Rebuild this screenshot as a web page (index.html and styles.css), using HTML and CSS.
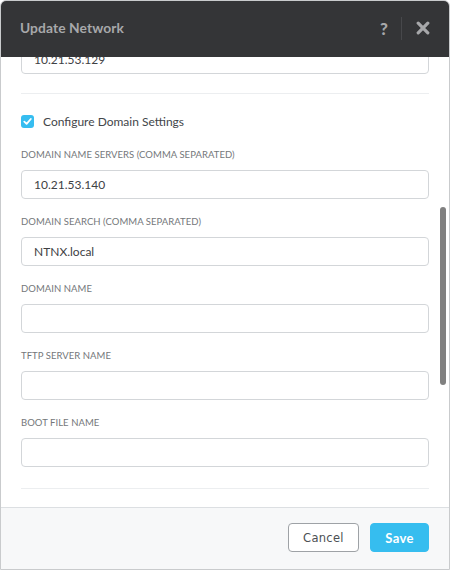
FILE: index.html
```html
<!DOCTYPE html>
<html lang="en">
<head>
<meta charset="utf-8">
<title>Update Network</title>
<link rel="stylesheet" href="styles.css">
</head>
<body>
<div class="dialog">
  <header class="dlg-header">
    <h1 class="dlg-title">Update Network</h1>
    <div class="dlg-actions">
      <span class="dlg-help">?</span>
      <span class="dlg-divider"></span>
      <svg class="dlg-close" width="14" height="14" viewBox="0 0 14 14" aria-label="Close">
        <path d="M2.2 2.2 L11.8 11.8 M11.8 2.2 L2.2 11.8" stroke="#a7a8aa" stroke-width="3.2" stroke-linecap="round"/>
      </svg>
    </div>
  </header>
  <div class="dlg-body" id="scroller">
    <div class="field">
      <label class="field-label">Name</label>
      <input class="field-input" type="text" value="vlan.0">
    </div>
    <div class="field">
      <label class="field-label">VLAN ID</label>
      <input class="field-input" type="text" value="0">
    </div>
    <div class="sep"></div>
    <label class="check-row"><span class="check"><svg width="9" height="9" viewBox="0 0 9 9"><path d="M1.3 4.6 L3.6 6.8 L7.8 2" fill="none" stroke="#ffffff" stroke-width="1.8" stroke-linecap="round" stroke-linejoin="round"/></svg></span>Enable IP Address Management</label>
    <div class="field">
      <label class="field-label">Network IP Address / Prefix Length</label>
      <input class="field-input" type="text" value="10.21.53.0/25">
    </div>
    <div class="field">
      <label class="field-label">Gateway IP Address</label>
      <input class="field-input" type="text" value="10.21.53.129">
    </div>
    <div class="sep" id="anchor"></div>
    <label class="check-row"><span class="check"><svg width="9" height="9" viewBox="0 0 9 9"><path d="M1.3 4.6 L3.6 6.8 L7.8 2" fill="none" stroke="#ffffff" stroke-width="1.8" stroke-linecap="round" stroke-linejoin="round"/></svg></span>Configure Domain Settings</label>
    <div class="field">
      <label class="field-label">Domain Name Servers (Comma Separated)</label>
      <input class="field-input" type="text" value="10.21.53.140">
    </div>
    <div class="field">
      <label class="field-label">Domain Search (Comma Separated)</label>
      <input class="field-input" type="text" value="NTNX.local">
    </div>
    <div class="field">
      <label class="field-label">Domain Name</label>
      <input class="field-input" type="text" value="">
    </div>
    <div class="field">
      <label class="field-label">TFTP Server Name</label>
      <input class="field-input" type="text" value="">
    </div>
    <div class="field">
      <label class="field-label">Boot File Name</label>
      <input class="field-input" type="text" value="">
    </div>
    <div class="sep sep-last"></div>
    <div class="section-title">IP Address Pools</div>
    <div class="pool-row">10.21.53.150 - 10.21.53.200</div>
    <div class="tail"></div>
  </div>
  <div class="scroll-thumb"></div>
  <footer class="dlg-footer">
    <button class="btn btn-cancel" type="button">Cancel</button>
    <button class="btn btn-save" type="button">Save</button>
  </footer>
</div>
<script src="app.js"></script>
</body>
</html>
```
FILE: styles.css
```css
* { box-sizing: border-box; }
html, body { margin: 0; padding: 0; background: #ffffff; }
body { font-family: Lato, "Open Sans", sans-serif; }

.dialog {
  position: relative;
  width: 450px;
  height: 570px;
  border: 1px solid #c9cbcd;
  border-radius: 6px 6px 0 0;
  display: flex;
  flex-direction: column;
  overflow: hidden;
  background: #ffffff;
}

.dlg-header {
  flex: 0 0 56px;
  background: #343537;
  display: flex;
  align-items: center;
  justify-content: space-between;
  padding: 0 19px 2px 19px;
}
.dlg-title {
  margin: 0;
  font-size: 13.8px;
  line-height: 16px;
  font-weight: 700;
  color: #a7a8aa;
  letter-spacing: 0.1px;
}
.dlg-actions {
  display: flex;
  align-items: center;
}
.dlg-help {
  font-size: 17px;
  font-weight: 900;
  color: #a7a8aa;
  line-height: 1;
}
.dlg-divider {
  width: 1px;
  height: 23px;
  background: #47484b;
  margin: 0 14px 0 13px;
}
.dlg-close { display: block; }

.dlg-body {
  flex: 1 1 auto;
  overflow: hidden;
  padding: 20px 20px 0 20px;
}

.scroll-thumb {
  position: absolute;
  left: 439px;
  top: 206px;
  width: 6px;
  height: 178px;
  border-radius: 3px;
  background: #808080;
}

.field { margin-bottom: 16px; }
.field-label {
  display: block;
  height: 14px;
  line-height: 14px;
  font-size: 9.5px;
  text-transform: uppercase;
  color: #74777a;
  margin-bottom: 8px;
  letter-spacing: 0.05px;
}
.field-input {
  display: block;
  width: 100%;
  height: 29px;
  border: 1px solid #d3d6d9;
  border-radius: 4px;
  padding: 0 12px;
  font-family: Lato, "Open Sans", sans-serif;
  font-size: 12px;
  color: #3e4144;
  background: #ffffff;
  outline: none;
}

.sep {
  height: 1px;
  background: #eceef0;
  margin: 19px 0 17px;
}
.sep-last { margin: 21px 0 40px; }

.check-row {
  display: flex;
  align-items: center;
  height: 20px;
  margin-bottom: 17px;
  font-size: 12px;
  color: #43464a;
}
.check {
  width: 13px;
  height: 13px;
  margin: 0 9px 0 0;
  border-radius: 3px;
  background: #36bdf0;
  display: flex;
  align-items: center;
  justify-content: center;
}
.check svg { display: block; }

.section-title {
  font-size: 12px;
  color: #43464a;
  margin-bottom: 12px;
}
.pool-row {
  height: 29px;
  line-height: 29px;
  font-size: 12px;
  color: #3a3d40;
  border-bottom: 1px solid #eceef0;
}
.tail { height: 150px; }

.dlg-footer {
  flex: 0 0 62px;
  background: #f7f8f9;
  border-top: 1px solid #dcdfe2;
  display: flex;
  justify-content: flex-end;
  align-items: flex-start;
  gap: 11px;
  padding: 15px 20px 0 0;
}
.btn {
  height: 29px;
  border-radius: 4px;
  font-size: 12px;
  cursor: pointer;
  padding: 0;
}
.btn-cancel {
  width: 71px;
  background: #ffffff;
  border: 1px solid #9ea2a6;
  color: #4c5054;
  font-family: "DejaVu Sans", Verdana, sans-serif;
  font-size: 11.5px;
  letter-spacing: 0.3px;
}
.btn-save {
  width: 59px;
  background: #36bdef;
  border: 1px solid #36bdef;
  color: #ffffff;
  font-family: Lato, sans-serif;
  font-weight: 700;
  font-size: 13px;
  letter-spacing: 0.3px;
}
```
FILE: app.js
```js
(function () {
  var s = document.getElementById('scroller');
  var a = document.getElementById('anchor');
  s.scrollTop = a.offsetTop - s.offsetTop - 36;
})();
```
